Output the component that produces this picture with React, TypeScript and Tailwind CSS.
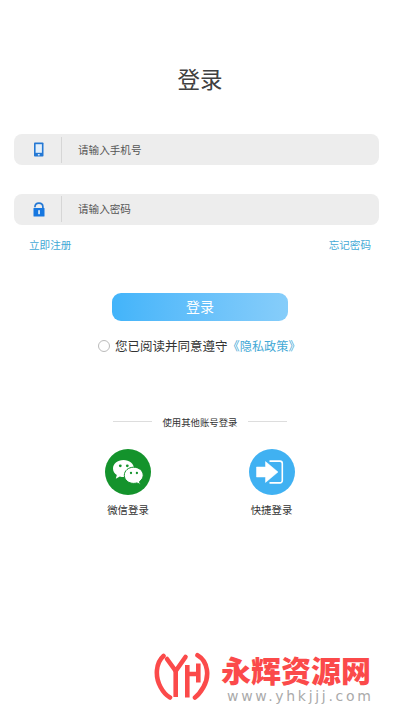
import type { ReactNode } from "react";

function PhoneIcon() {
  return (
    <svg width="10" height="15" viewBox="0 0 10 15">
      <rect x="0" y="0.5" width="9.500" height="14" rx="0.8" fill="#2478d4" />
      <rect x="1.6" y="2.200" width="6.300" height="8.600" fill="#e2effb" />
      <rect x="3.800" y="12" width="2" height="1.400" rx="0.6" fill="#e2effb" />
    </svg>
  );
}

function LockIcon() {
  return (
    <svg width="12" height="15" viewBox="0 0 12 15">
      <path d="M1.900 5.200C2 2.500 3.700 1.200 5.900 1.200S9.900 2.500 9.900 5v2" fill="none" stroke="#2478d4" strokeWidth="1.700" />
      <rect x="0.500" y="6" width="11" height="8.500" rx="0.6" fill="#1677e0" />
      <rect x="5.200" y="8.200" width="1.700" height="4" fill="#e2effb" />
    </svg>
  );
}

function WechatIcon() {
  return (
    <svg width="46" height="46" viewBox="0 0 46 46">
      <circle cx="23" cy="23" r="23" fill="#14932c" />
      <path d="M18.500 11C12.400 11 8 14.800 8 19.500c0 2.800 1.400 5 3.800 6.600l-1 3.600 4-2.200c1.200.4 2.400.5 3.700.5 6 0 10.500-3.900 10.500-8.500S24.500 11 18.500 11z" fill="#fff" />
      <path d="M28.700 18.200c-5.300 0-9.400 3.500-9.400 8.100s4.100 8.100 9.400 8.100c1.100 0 2.200-.2 3.200-.5l3.500 1.700-.9-3c2.100-1.500 3.700-3.700 3.700-6.300 0-4.500-4.200-8.100-9.500-8.100z" fill="#fff" stroke="#14932c" strokeWidth="1" />
      <g fill="#14932c">
        <circle cx="15.300" cy="16.800" r="1.400" />
        <circle cx="22.300" cy="16.800" r="1.400" />
        <circle cx="26" cy="24" r="1.150" />
        <circle cx="31.900" cy="24" r="1.150" />
      </g>
    </svg>
  );
}

function QuickIcon() {
  return (
    <svg width="46" height="46" viewBox="0 0 46 46">
      <circle cx="23" cy="23" r="23" fill="#40b1f2" />
      <path d="M20.500 12.100H31a2.300 2.300 0 0 1 2.300 2.300V31.600a2.300 2.300 0 0 1-2.300 2.300H20.500" fill="none" stroke="#fff" strokeWidth="1.600" />
      <path d="M7.500 18h9v-5.400L29 23 16.500 33.400V28h-9z" fill="#fff" stroke="#fff" strokeWidth="0.500" strokeLinejoin="round" />
    </svg>
  );
}

function SiteLogo() {
  return (
    <svg width="56" height="52" viewBox="0 0 56 52" fill="none" stroke="#fb4a4a" strokeWidth="4.600">
      <path d="M9.500 5C1.500 12 1 26 6.500 36Q10.500 43.500 16 46.500" strokeLinecap="round" />
      <path d="M13 8L21.700 20 31.500 6" strokeLinecap="round" strokeLinejoin="round" />
      <path d="M21.700 19V46" />
      <path d="M33.300 14V46.500M33.300 23H44.500M44.300 12.500V31.500" />
      <path d="M43.500 4.200C54.500 10.500 55.500 26 49.500 36Q45.500 43 41 46.500" strokeLinecap="round" />
    </svg>
  );
}

function Field({ icon, text }: { icon: ReactNode; text: string }) {
  return (
    <div className="flex items-center h-[31.4px] rounded-lg bg-[#ededed]">
      <div className="flex justify-center w-[47px] pl-[3px]">{icon}</div>
      <div className="w-px h-[26px] bg-[#d6d6d6]" />
      <span className="ml-[16px] text-[10.6px] text-[#555]">{text}</span>
    </div>
  );
}

function Account({ icon, label }: { icon: ReactNode; label: string }) {
  return (
    <div className="flex flex-col items-center w-[60px]">
      {icon}
      <span className="mt-[7px] h-4 text-[10.4px] leading-4 text-[#333]">{label}</span>
    </div>
  );
}

export default function App() {
  return (
    <div className="flex flex-col w-[400px] h-[711px] overflow-hidden bg-white whitespace-nowrap font-['Noto_Sans_CJK_SC',sans-serif]">
      <h1 className="mt-[62px] h-8 text-center text-[22.5px] leading-8 text-[#404040]">登录</h1>

      {/* form */}
      <div className="flex flex-col gap-[28.2px] mt-[40px] ml-[14px] w-[365px]">
        <Field icon={<PhoneIcon />} text="请输入手机号" />
        <Field icon={<LockIcon />} text="请输入密码" />
      </div>
      <div className="flex justify-between mt-[12px] ml-[29px] w-[342px] h-4 text-[10.6px] leading-4 text-[#43a9d6]">
        <span>立即注册</span>
        <span>忘记密码</span>
      </div>

      <button className="mt-[40px] ml-[112px] w-[176px] h-[28px] rounded-[9px] bg-linear-to-r from-[#42b4fa] to-[#86cdfa] text-[14px] leading-[27px] text-white">
        登录
      </button>
      <div className="flex items-center mt-[15px] ml-[98px] h-5 text-[12.5px] text-[#333]">
        <span className="mr-[5px] w-3 h-3 rounded-full border border-[#bbb]" />
        <span>您已阅读并同意遵守</span>
        <span className="text-[12.2px] text-[#43a9d6]">《隐私政策》</span>
      </div>

      {/* other accounts */}
      <div className="flex items-center justify-between mt-[58px] ml-[113px] w-[174px] h-4 text-[9.4px] text-[#333]">
        <div className="w-[39px] h-px bg-[#ddd]" />
        <span>使用其他账号登录</span>
        <div className="w-[39px] h-px bg-[#ddd]" />
      </div>
      <div className="flex justify-between mt-[19px] ml-[98px] w-[203.5px]">
        <Account icon={<WechatIcon />} label="微信登录" />
        <Account icon={<QuickIcon />} label="快捷登录" />
      </div>

      {/* site mark */}
      <div className="flex mt-[133px] ml-[154px]">
        <SiteLogo />
        <div className="ml-[11px]">
          <div className="h-[37px] text-[30px] leading-[37px] font-black text-[#fb4a4a]">永辉资源网</div>
          <div className="ml-[6px] h-4 font-['DejaVu_Sans',sans-serif] text-[14px] leading-4 tracking-[2.7px] text-[#aaa]">www.yhkjjj.com</div>
        </div>
      </div>
    </div>
  );
}
